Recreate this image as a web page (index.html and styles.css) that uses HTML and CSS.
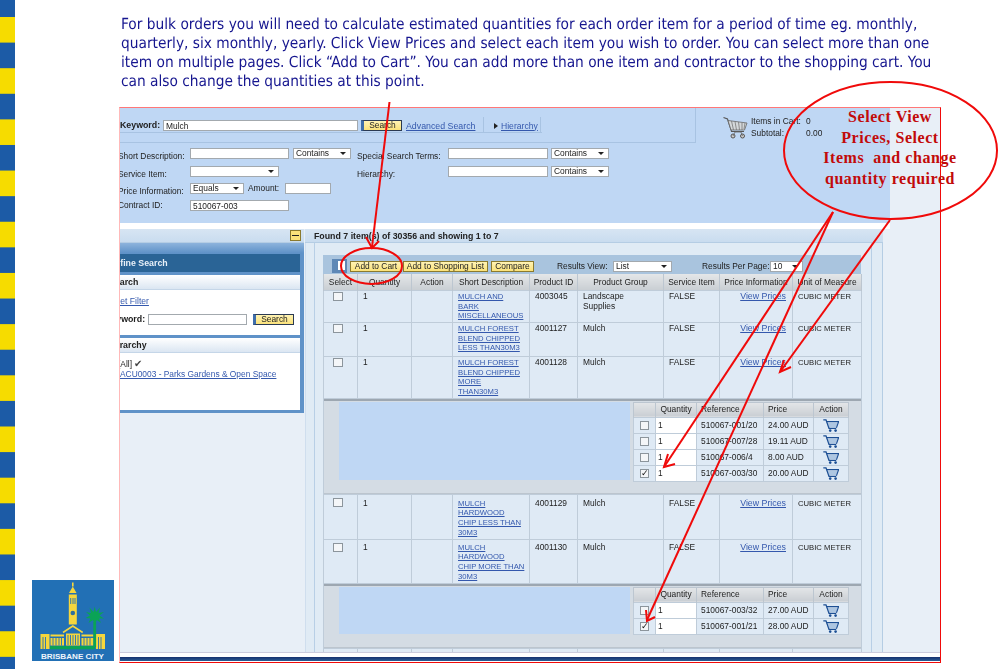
FILE: index.html
```html
<!DOCTYPE html>
<html lang="en">
<head>
<meta charset="utf-8">
<title>Bulk orders</title>
<link rel="stylesheet" href="styles.css">
</head>
<body>
<svg class="defs" width="0" height="0">
  <symbol id="cart" viewBox="0 0 16 13">
    <path d="M5 3.5H15L13.2 8.6H6.4Z" fill="#cfe0f2"/>
    <path d="M0.3 0.8H3L6 9.3H13.2" fill="none" stroke="#1d4f94" stroke-width="1.3"/>
    <path d="M3.4 2.6H15.6L13.4 8.8" fill="none" stroke="#1d4f94" stroke-width="1.2"/>
    <path d="M5 5H14.3M5.6 7H13.7" stroke="#6f95c4" stroke-width="0.7"/>
    <circle cx="7.2" cy="11.6" r="1.3" fill="#1d4f94"/>
    <circle cx="12.6" cy="11.6" r="1.3" fill="#1d4f94"/>
  </symbol>
</svg>
<div class="slide">
  <div class="stripe"></div>
  <div class="aside">
    <svg class="logo" viewBox="0 0 82 81" width="82" height="81">
      <rect width="82" height="81" fill="#2270b5"/>
      <g fill="#f5d63d">
        <rect x="40" y="2.5" width="1.6" height="4"/>
        <path d="M37 13L40.8 6.5L44.5 13Z"/>
        <rect x="36.8" y="14.5" width="8" height="30"/>
        <path d="M31 52.5L40.8 46L50.7 52.5" fill="none" stroke="#f5d63d" stroke-width="1.5"/>
        <rect x="34" y="53.5" width="14" height="12"/>
        <rect x="8.5" y="54" width="9" height="15"/>
        <rect x="18.5" y="58" width="13.5" height="7.5"/>
        <rect x="49.5" y="58" width="12" height="7.5"/>
        <rect x="64" y="54" width="9" height="15"/>
        <rect x="18.5" y="54.5" width="13.5" height="2"/>
        <rect x="49.5" y="54.5" width="12" height="2"/>
      </g>
      <path d="M38.7 18V24M41 18V24M43 18V24M36 55V65M38.5 55V65M41 55V65M43.5 55V65M46 55V65M11 57V69M13.5 57V69M66.5 57V69M69 57V69M21 58V65.5M24 58V65.5M27 58V65.5M29.5 58V65.5M52 58V65.5M55 58V65.5M58 58V65.5" stroke="#2270b5" stroke-width="0.9"/>
      <circle cx="40.8" cy="33" r="2.3" fill="#2f6f9f"/>
      <g fill="#0aa356">
        <rect x="18" y="66" width="45" height="3.3"/>
        <rect x="61.3" y="42" width="2.8" height="25"/>
        <path d="M62.7 26.5L64 32L68 27.5L66.5 33L72 32L67.5 35.5L72 38.5L67 38.5L69 43L64.8 40L62.7 45L61 40L56.5 43L58.5 38.5L53.5 38L58 35.5L54 32L59 33L57.5 27.5L61.5 32Z"/>
      </g>
      <text class="logo-text" x="40.5" y="78.6" text-anchor="middle">BRISBANE CITY</text>
    </svg>
  </div>
  <div class="main">
    <p class="intro">For bulk orders you will need to calculate estimated quantities for each order item for a period of time eg. monthly,<br>quarterly, six monthly, yearly. Click View Prices and select each item you wish to order. You can select more than one<br>item on multiple pages. Click “Add to Cart”. You can add more than one item and contractor to the shopping cart. You<br>can also change the quantities at this point.</p>
    <div class="frame">
      <div class="shot">
        <div class="work">
          <div class="head">
            <div class="head-top">
              <div class="tabs">
                <div class="kw-row">
                  <b class="kw-label">Keyword:</b>
                  <input class="inp kw-input" value="Mulch">
                  <span class="btn btn-dark">Search</span>
                  <a class="link adv">Advanced Search</a>
                  <span class="tab"><i class="tri"></i><a class="link">Hierarchy</a></span>
                </div>
              </div>
              <div class="cartinfo">
                <svg class="bigcart" viewBox="0 0 25 23" width="25" height="23">
                  <path d="M0.5 1.5L4.5 3L8.5 15.5H21" fill="none" stroke="#555" stroke-width="1.1"/>
                  <path d="M5 4.5L24 7L21.5 14H8Z" fill="#d4d8da" stroke="#666" stroke-width="0.8"/>
                  <path d="M8.5 5L10.5 14M12 5.5L13.5 14M15.5 6L16.5 14M19 6.5L19 14M22 7L21 13" stroke="#777" stroke-width="0.8"/>
                  <circle cx="10" cy="20" r="2" fill="#ccc" stroke="#555"/>
                  <circle cx="19.5" cy="20" r="2" fill="#ccc" stroke="#555"/>
                  <path d="M10 20L12 16H18L19.5 20" fill="none" stroke="#666" stroke-width="0.8"/>
                </svg>
                <div class="cart-grid">
                  <span>Items in Cart:</span><span>0</span>
                  <span>Subtotal:</span><span>0.00</span>
                </div>
              </div>
            </div>
            <div class="form">
              <div class="frow">
                <label class="lab">Short Description:</label>
                <input class="inp w99">
                <span class="sel w58 gap4">Contains</span>
                <label class="lab lab2">Special Search Terms:</label>
                <input class="inp w100">
                <span class="sel w58">Contains</span>
              </div>
              <div class="frow">
                <label class="lab">Service Item:</label>
                <span class="sel w89"></span>
                <label class="lab lab2 push">Hierarchy:</label>
                <input class="inp w100">
                <span class="sel w58">Contains</span>
              </div>
              <div class="frow">
                <label class="lab">Price Information:</label>
                <span class="sel w54">Equals</span>
                <span class="amount">Amount:</span>
                <input class="inp w46">
              </div>
              <div class="frow">
                <label class="lab labc">Contract ID:</label>
                <input class="inp w99" value="510067-003">
              </div>
            </div>
          </div>
          <div class="gap"></div>
          <div class="body">
            <div class="navcol">
              <div class="bar navbar"><span class="minus"></span></div>
              <div class="nav">
                <div class="nav-title"><span class="cut">Refine Search</span></div>
                <section class="nav-sec sec1">
                  <h4 class="sec-h"><span class="cut">Search</span></h4>
                  <a class="link reset">Reset Filter</a>
                  <div class="nav-kw"><b class="nkw">Keyword:</b><input class="inp w99"><span class="btn btn-dark">Search</span></div>
                </section>
                <section class="nav-sec sec2">
                  <h4 class="sec-h"><span class="cut2">Hierarchy</span></h4>
                  <div class="all"><span class="cut1">[All]</span> <span class="tick">✔</span></div>
                  <a class="link acu">ACU0003 - Parks Gardens &amp; Open Space</a>
                </section>
              </div>
            </div>
            <div class="results">
              <div class="bar found"><b>Found 7 item(s) of 30356 and showing 1 to 7</b></div>
              <div class="res-body">
                <div class="res-inner">
                  <div class="panel">
                    <div class="toolbar">
                      <span class="selall"><i></i></span>
                      <span class="btn b52">Add to Cart</span>
                      <span class="btn b85">Add to Shopping List</span>
                      <span class="btn b43">Compare</span>
                      <span class="tb-label view">Results View:</span>
                      <span class="sel w59">List</span>
                      <span class="tb-label perpage">Results Per Page:</span>
                      <span class="sel w33">10</span>
                    </div>
                    <table class="grid">
                      <colgroup>
                        <col class="c1"><col class="c2"><col class="c3"><col class="c4"><col class="c5"><col class="c6"><col class="c7"><col class="c8"><col class="c9">
                      </colgroup>
                      <thead>
                        <tr><th>Select</th><th>Quantity</th><th>Action</th><th>Short Description</th><th>Product ID</th><th>Product Group</th><th>Service Item</th><th>Price Information</th><th>Unit of Measure</th></tr>
                      </thead>
                      <tbody>
                        <tr class="h32"><td class="tc"><i class="cb"></i></td><td>1</td><td></td><td><a class="link uc">MULCH AND<br>BARK<br>MISCELLANEOUS</a></td><td>4003045</td><td>Landscape<br>Supplies</td><td>FALSE</td><td class="vp"><a class="link">View Prices</a></td><td class="uc">CUBIC METER</td></tr>
                        <tr class="h34"><td class="tc"><i class="cb"></i></td><td>1</td><td></td><td><a class="link uc">MULCH FOREST<br>BLEND CHIPPED<br>LESS THAN30M3</a></td><td>4001127</td><td>Mulch</td><td>FALSE</td><td class="vp"><a class="link">View Prices</a></td><td class="uc">CUBIC METER</td></tr>
                        <tr class="h42"><td class="tc"><i class="cb"></i></td><td>1</td><td></td><td><a class="link uc">MULCH FOREST<br>BLEND CHIPPED<br>MORE<br>THAN30M3</a></td><td>4001128</td><td>Mulch</td><td>FALSE</td><td class="vp"><a class="link">View Prices</a></td><td class="uc">CUBIC METER</td></tr>
                        <tr><td colspan="9" class="xcell">
                          <div class="exp exp1">
                            <div class="blue"></div>
                            <table class="sub">
                              <colgroup><col class="s1"><col class="s2"><col class="s3"><col class="s4"><col class="s5"></colgroup>
                              <thead><tr><th></th><th>Quantity</th><th class="tl">Reference</th><th class="tl">Price</th><th>Action</th></tr></thead>
                              <tbody>
                                <tr><td class="tc"><i class="cb"></i></td><td class="q">1</td><td>510067-001/20</td><td>24.00 AUD</td><td class="tc"><svg class="ci"><use href="#cart"/></svg></td></tr>
                                <tr><td class="tc"><i class="cb"></i></td><td class="q">1</td><td>510067-007/28</td><td>19.11 AUD</td><td class="tc"><svg class="ci"><use href="#cart"/></svg></td></tr>
                                <tr><td class="tc"><i class="cb"></i></td><td class="q">1</td><td>510067-006/4</td><td>8.00 AUD</td><td class="tc"><svg class="ci"><use href="#cart"/></svg></td></tr>
                                <tr><td class="tc"><i class="cb on">✓</i></td><td class="q">1</td><td>510067-003/30</td><td>20.00 AUD</td><td class="tc"><svg class="ci"><use href="#cart"/></svg></td></tr>
                              </tbody>
                            </table>
                          </div>
                        </td></tr>
                        <tr class="h45"><td class="tc"><i class="cb"></i></td><td>1</td><td></td><td><a class="link uc">MULCH<br>HARDWOOD<br>CHIP LESS THAN<br>30M3</a></td><td>4001129</td><td>Mulch</td><td>FALSE</td><td class="vp"><a class="link">View Prices</a></td><td class="uc">CUBIC METER</td></tr>
                        <tr class="h44"><td class="tc"><i class="cb"></i></td><td>1</td><td></td><td><a class="link uc">MULCH<br>HARDWOOD<br>CHIP MORE THAN<br>30M3</a></td><td>4001130</td><td>Mulch</td><td>FALSE</td><td class="vp"><a class="link">View Prices</a></td><td class="uc">CUBIC METER</td></tr>
                        <tr><td colspan="9" class="xcell">
                          <div class="exp exp2">
                            <div class="blue"></div>
                            <table class="sub">
                              <colgroup><col class="s1"><col class="s2"><col class="s3"><col class="s4"><col class="s5"></colgroup>
                              <thead><tr><th></th><th>Quantity</th><th class="tl">Reference</th><th class="tl">Price</th><th>Action</th></tr></thead>
                              <tbody>
                                <tr><td class="tc"><i class="cb"></i></td><td class="q">1</td><td>510067-003/32</td><td>27.00 AUD</td><td class="tc"><svg class="ci"><use href="#cart"/></svg></td></tr>
                                <tr><td class="tc"><i class="cb on">✓</i></td><td class="q">1</td><td>510067-001/21</td><td>28.00 AUD</td><td class="tc"><svg class="ci"><use href="#cart"/></svg></td></tr>
                              </tbody>
                            </table>
                          </div>
                        </td></tr>
                        <tr class="h5"><td></td><td></td><td></td><td></td><td></td><td></td><td></td><td></td><td></td></tr>
                      </tbody>
                    </table>
                  </div>
                </div>
              </div>
            </div>
          </div>
        </div>
        <div class="side"></div>
      </div>
      <div class="foot"><div class="navy"></div></div>
    </div>
  </div>
  <svg class="marks" width="1008" height="669" viewBox="0 0 1008 669">
    <g fill="none" stroke="#f00a0a" stroke-width="2">
      <ellipse cx="890.5" cy="150.5" rx="106.5" ry="68.5"/>
      <ellipse cx="371.5" cy="266" rx="30.5" ry="18"/>
      <path d="M389.5 102L372 247"/>
      <path d="M366 237L372 248L379 241"/>
      <path d="M833 212L664 467"/>
      <path d="M675 464L664 467L668 454"/>
      <path d="M833 212L647 620"/>
      <path d="M655 617L647 621L646 610"/>
      <path d="M890 220L780 372"/>
      <path d="M791 367L780 372L784 360"/>
    </g>
  </svg>
  <div class="callout">Select View<br>Prices, Select<br>Items&nbsp; and change<br>quantity required</div>
</div>
</body>
</html>
```
FILE: styles.css
```css
* { box-sizing: border-box; }
html, body { margin: 0; padding: 0; background: #fff; }
.defs { position: absolute; }
.slide {
  position: relative;
  display: flex;
  width: 1008px;
  height: 669px;
  overflow: hidden;
  font-family: "Liberation Sans", Arial, sans-serif;
}
.stripe {
  width: 15px;
  flex: none;
  background: linear-gradient(180deg, #f6dc00 0, #f6dc00 50%, #1c5ba6 50%, #1c5ba6 100%) 0 17px / 100% 51.2px;
}
.aside {
  width: 104px;
  flex: none;
  display: flex;
  align-items: flex-end;
  padding: 0 0 8px 17px;
}
.logo { display: block; }
.logo-text { font: bold 8.1px "Liberation Sans", Arial, sans-serif; fill: #eef4fb; }
.main { width: 822px; flex: none; }
.intro {
  margin: 0;
  height: 107px;
  padding: 15px 0 0 2px;
  font-family: "DejaVu Sans Condensed", "DejaVu Sans", sans-serif;
  font-size: 15.3px;
  line-height: 19px;
  color: #16168f;
  white-space: nowrap;
  text-rendering: geometricPrecision;
  filter: blur(0.25px);
}
.frame {
  width: 822px;
  height: 556px;
  border: 1px solid #f00a0a;
  border-top-color: #f77;
  border-left-color: #ffb9b9;
  display: flex;
  flex-direction: column;
  overflow: hidden;
  font-size: 8.4px;
  color: #222;
  filter: blur(0.35px);
}
.shot { flex: 1; min-height: 0; display: flex; background: #e8eff7; overflow: hidden; }
.work { width: 770px; flex: none; display: flex; flex-direction: column; }
.side { flex: 1; background: #e8eff7; }
.foot { height: 10px; flex: none; padding-top: 4px; background: #fff; border-top: 1px solid #ccd; }
.navy { height: 4px; background: linear-gradient(180deg, #16316f, #2a5c94); }

.link { color: #3458ad; text-decoration: underline; }
.inp {
  display: block;
  height: 11px;
  padding: 0 2px;
  margin: 0;
  border: 1px solid #a3a9ae;
  background: #fff;
  font: 8.4px "Liberation Sans", Arial, sans-serif;
  color: #222;
  outline: 0;
  flex: none;
}
.w99 { width: 99px; }
.w100 { width: 100px; }
.w46 { width: 46px; }
.sel {
  position: relative;
  display: block;
  height: 11px;
  flex: none;
  padding: 0 2px;
  line-height: 9px;
  border: 1px solid #a3a9ae;
  background: #fff;
  color: #222;
}
.sel::after {
  content: "";
  position: absolute;
  right: 4px;
  top: 3px;
  border: 3px solid transparent;
  border-top: 3px solid #222;
  border-left-width: 3.5px;
  border-right-width: 3.5px;
}
.w33 { width: 33px; }
.w54 { width: 54px; }
.w58 { width: 58px; margin-left: 3px; }
.gap4 { margin-left: 4px; }
.w59 { width: 59px; }
.w89 { width: 89px; }
.btn {
  display: block;
  flex: none;
  height: 11px;
  padding: 0;
  line-height: 9px;
  text-align: center;
  border: 1px solid #8b7a2e;
  background: linear-gradient(180deg, #fff3b4, #fbe27a);
  color: #222;
  white-space: nowrap;
}
.b52 { width: 52px; margin-right: 1px; }
.b85 { width: 85px; margin-right: 3px; }
.b43 { width: 43px; }
.btn-dark {
  width: 41px;
  border: 1px solid #2b3a52;
  border-left: 3px solid #3f6eab;
}

.head { height: 115px; flex: none; background: #bfd7f4; }
.head-top { height: 35px; display: flex; }
.tabs {
  width: 576px;
  height: 35px;
  border-right: 1px solid #a8c3e2;
  border-bottom: 1px solid #a8c3e2;
}
.kw-row {
  display: flex;
  align-items: flex-start;
  height: 25px;
  padding-top: 12px;
  border-bottom: 1px solid #a8c3e2;
  width: 422px;
}
.kw-label { width: 43px; font-size: 8.8px; line-height: 11px; }
.kw-input { width: 195px; }
.kw-row .btn { margin-left: 3px; }
.adv { margin-left: 4px; line-height: 12px; width: 77px; font-size: 8.8px; white-space: nowrap; }
.tab {
  height: 15px;
  margin-top: -3px;
  width: 58px;
  display: flex;
  align-items: center;
  gap: 3px;
  padding: 2px 0 0 10px;
  border-left: 1px solid #a8c3e2;
  border-right: 1px solid #a8c3e2;
  flex: none;
}
.tab .link { font-size: 8.6px; }
.tri { border: 3px solid transparent; border-left: 4px solid #222; border-right: 0; }
.cartinfo { display: flex; padding: 8px 0 0 27px; gap: 3px; }
.bigcart { display: block; flex: none; }
.cart-grid {
  display: grid;
  grid-template-columns: 55px auto;
  grid-auto-rows: 12px;
  margin-top: -1px;
  line-height: 12px;
}
.form { padding-top: 5px; }
.frow { display: flex; height: 11px; margin-bottom: 6px; }
.frow:first-child { margin-bottom: 7px; }
.lab { width: 72px; margin-left: -2px; flex: none; padding-top: 3px; line-height: 10px; white-space: nowrap; }
.labc { padding-top: 0; }
.lab2 { width: 91px; margin-left: 6px; }
.push { margin-left: 78px; }
.amount { margin-left: 4px; width: 37px; }

.gap { height: 6px; background: #fff; flex: none; }
.body { flex: 1; min-height: 0; display: flex; }
.navcol { width: 184px; flex: none; margin-right: 1px; }
.bar { height: 14px; background: linear-gradient(180deg, #d7e5f3, #c9dcef); border-bottom: 1px solid #b5cde4; display: flex; align-items: center; }
.navbar { justify-content: flex-end; padding-right: 3px; }
.minus {
  display: block;
  width: 11px;
  height: 11px;
  background: #fbe27a linear-gradient(#222, #222) center / 7px 1px no-repeat;
  border: 1px solid #8b7a2e;
}
.nav {
  height: 170px;
  padding: 11px 4px 3px 0;
  background: linear-gradient(180deg, #8db3dc 0, #5f92c8 10px);
  overflow: hidden;
}
.nav-title {
  height: 18px;
  margin-bottom: 3px;
  background: #2a6496;
  color: #e8f0f8;
  font-weight: bold;
  font-size: 8.8px;
  line-height: 18px;
}
.cut { display: block; margin-left: -11px; }
.cut1 { margin-left: -2px; }
.cut2 { display: block; margin-left: -14px; }
.nav-sec { background: #fff; }
.sec1 { height: 60px; margin-bottom: 3px; }
.sec2 { height: 72px; }
.sec-h {
  margin: 0;
  height: 15px;
  padding-top: 2px;
  font-size: 8.8px;
  line-height: 11px;
  background: linear-gradient(180deg, #fff, #dbe6f2);
  border-bottom: 1px solid #c5d6e8;
}
.reset { display: block; margin-top: 6px; margin-left: -15px; line-height: 10px; font-size: 8.6px; }
.nav-kw { display: flex; margin-top: 8px; }
.nkw { margin-left: -15px; width: 43px; line-height: 11px; flex: none; text-align: right; padding-right: 3px; font-size: 8.8px; white-space: nowrap; }
.nav-kw .btn { margin-left: 6px; }
.all { padding-top: 6px; line-height: 10px; }
.tick { color: #444; font-size: 9.5px; }
.acu { font-size: 8.4px; white-space: nowrap; }
.results { width: 578px; flex: none; }
.found { padding-left: 9px; font-size: 8.8px; }
.res-body { height: 409px; padding: 0 10px 0 8px; background: #e0ebf5; border-right: 1px solid #b5cde4; border-left: 1px solid #cfdeee; }
.res-inner { height: 409px; padding: 12px 12px 0 8px; border-left: 1px solid #b8cfe6; border-right: 1px solid #b8cfe6; }
.panel { width: 538px; }
.toolbar {
  display: flex;
  align-items: flex-start;
  height: 19px;
  padding: 6px 0 0 9px;
  background: #a9c4de;
}
.selall {
  display: block;
  flex: none;
  margin: -2px 3px 0 0;
  width: 15px;
  height: 14px;
  padding: 2px;
  background: #5f88b6;
}
.selall i { display: block; width: 7px; height: 9px; margin: 0 0 0 4px; background: #fff; }
.tb-label { line-height: 10px; white-space: nowrap; }
.view { margin-left: 23px; width: 56px; }
.perpage { margin-left: 30px; width: 68px; }

.grid, .sub { border-collapse: collapse; table-layout: fixed; }
.grid { width: 538px; background: #dfeaf5; }
.c1 { width: 34px; }
.c2 { width: 54px; }
.c3 { width: 41px; }
.c4 { width: 77px; }
.c5 { width: 48px; }
.c6 { width: 86px; }
.c7 { width: 56px; }
.c8 { width: 73px; }
.c9 { width: 69px; }
.grid th, .sub th {
  height: 16px;
  padding: 0;
  font-weight: normal;
  white-space: nowrap;
  overflow: hidden;
  background: linear-gradient(180deg, #e4e6e8, #c9ced3);
  border: 1px solid #bcc6d0;
  border-width: 0 1px;
}
.grid td {
  padding: 1.5px 1px 0 5px;
  vertical-align: top;
  line-height: 9.7px;
  border: 1px solid #bfccd9;
  white-space: nowrap;
}
.grid .uc { font-size: 7.7px; }
.grid td.tc { padding: 1px 0 0 9px; }
.grid td.vp { text-align: right; padding-right: 6px; font-size: 8.8px; }
.h32 td { height: 32px; }
.h34 td { height: 34px; }
.h42 td { height: 42px; }
.h44 td { height: 44px; padding-top: 3px; }
.h45 td { height: 45px; padding-top: 4px; }
.h44 td.tc, .h45 td.tc { padding-top: 3.5px; }
.h5 td { height: 5px; }
.cb {
  display: block;
  width: 10px;
  height: 9px;
  border: 1px solid #8c959c;
  background: #f4f6f8;
  font: normal 9px/7px "DejaVu Sans", sans-serif;
  color: #111;
  text-align: center;
}
.grid td.xcell { padding: 0; border-width: 0 1px; }
.exp {
  display: flex;
  align-items: flex-start;
  padding: 1px 0 0 15px;
  background: #d4dce4;
  border-top: 2px solid #9da7b1;
  border-bottom: 1px solid #bcc5ce;
}
.exp1 { height: 95px; }
.exp2 { height: 64px; }
.blue { width: 291px; margin-right: 3px; background: #bfd7f4; flex: none; }
.exp1 .blue { height: 78px; }
.exp2 .blue { height: 47px; }
.sub { width: 215px; background: #dfeaf5; border: 1px solid #bcc6d0; }
.s1 { width: 22px; }
.s2 { width: 41px; }
.s3 { width: 67px; }
.s4 { width: 50px; }
.s5 { width: 35px; }
.sub th { height: 15px; }
.sub th.tl { text-align: left; padding-left: 4px; }
.grid .sub td {
  height: 16px;
  padding: 0 0 0 4px;
  line-height: 15px;
  vertical-align: middle;
}
.grid .sub td.tc { padding: 0; }
.grid .sub .cb { margin: 0 auto; width: 9px; height: 9px; line-height: 7px; }
.grid .sub td.q { background: #fff; padding-left: 2px; }
.ci { display: block; width: 16px; height: 13px; margin: 0 auto; }

.marks { position: absolute; left: 0; top: 0; pointer-events: none; }
.callout {
  position: absolute;
  left: 790px;
  top: 107px;
  width: 200px;
  text-align: center;
  font: bold 16px/20.7px "Liberation Serif", "Times New Roman", serif;
  letter-spacing: 0.55px;
  color: #c20a0a;
}
```
